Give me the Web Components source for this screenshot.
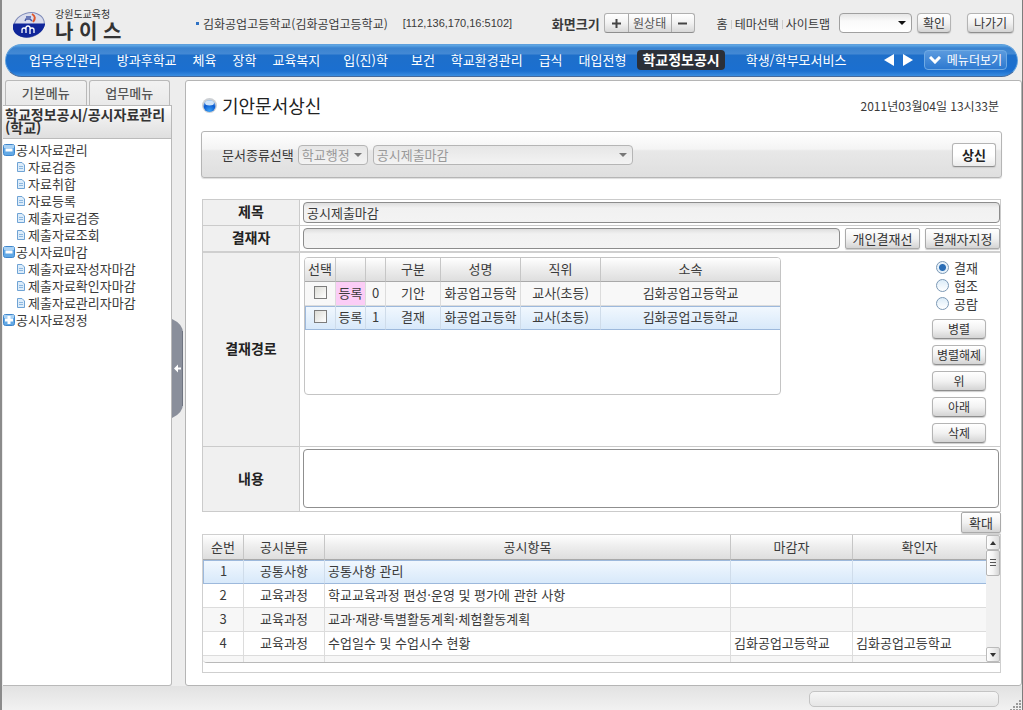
<!DOCTYPE html>
<html lang="ko">
<head>
<meta charset="utf-8">
<meta name="viewport" content="width=device-width, initial-scale=1">
<title>나이스 - 기안문서상신</title>
<style>
html { height: 100%; }
body { margin: 0; min-height: 100%; display: flex; font: 13px/17px "Noto Sans CJK KR", "Noto Sans", sans-serif; color: #3a3a3a; background: #ededed; }
neis-app { flex: 1; }
</style>
</head>
<body>
<neis-app></neis-app>
<script>
const base = `
*, *::before, *::after { box-sizing: border-box; }
button, input, select, textarea { font: inherit; color: inherit; margin: 0; }
a { color: inherit; text-decoration: none; }
`;
function define(name, css, html, setup) {
  const template = document.createElement('template');
  template.innerHTML = `<style>${base}${css}</style>${html}`;
  customElements.define(name, class extends HTMLElement {
    constructor() {
      super();
      this.attachShadow({ mode: 'open' }).append(template.content.cloneNode(true));
    }
    connectedCallback() {
      if (setup) setup(this, this.shadowRoot);
    }
  });
}

/* Push button; variants: strong, square */
define('ui-button', `
:host { display: inline-flex; height: 20px; font-size: 12px; color: #333; }
button { flex: 1; padding: 0 3px; border: 1px solid #b4b4b4; border-bottom-color: #8e8e8e; border-radius: 4px; line-height: 16px; white-space: nowrap;
  background: linear-gradient(#fff, #f2f2f2 50%, #d4d4d4); box-shadow: 0 1px 1px #ccc; }
:host([variant="square"]) button { border-radius: 2px; border-color: #aaa; }
:host([variant="square"]) { height: 21px; font-size: 13px; }
:host([variant="strong"]) { height: 24px; font-size: 13px; font-weight: 700; color: #222; }
:host([variant="strong"]) button { padding: 0 9px; border-radius: 3px; background: linear-gradient(#fff, #fff 50%, #ebebeb); }
`, `<button type="button"><slot></slot></button>`);

/* Drop-down frame; the select itself is passed in by the user */
define('ui-select', `
:host { display: inline-flex; position: relative; height: 20px; }
::slotted(select) { appearance: none; flex: 1; width: 100%; min-width: 0; padding: 0 18px 0 3px; border: 1px solid #a0a0a0; border-radius: 4px; background: linear-gradient(#e6e6e6, #fafafa 40%, #fff); font: inherit; line-height: 18px; color: inherit; opacity: 1; }
:host([muted]) { color: #999; }
:host([muted]) ::slotted(select) { border-color: #b5b5b5; background: linear-gradient(#e6e6e6, #f3f3f3); }
svg { position: absolute; right: 6px; top: 8px; pointer-events: none; fill: #111; }
:host([muted]) svg { fill: #777; }
`, `<slot></slot><svg width="8" height="4" viewBox="0 0 8 4"><path d="M0 0h8L4 4z"/></svg>`);

define('neis-logo', `
:host { display: flex; align-items: flex-start; gap: 10px; }
.words { display: flex; flex-direction: column; }
small { font-size: 10px; line-height: 12px; color: #333; }
strong { font-size: 20px; line-height: 22px; color: #333; }
svg { margin-top: 3px; }
`, `
<svg width="32" height="28" viewBox="0 0 32 28">
  <defs><clipPath id="c"><ellipse cx="16" cy="14" rx="16.5" ry="12" transform="rotate(-17 16 14)"/></clipPath></defs>
  <ellipse cx="16" cy="14" rx="15.500" ry="12" transform="rotate(-17 16 14)" fill="#d9dcec" stroke="#7f8bb8"/>
  <path clip-path="url(#c)" d="M0 12.500h32v16H0z" fill="#10269a"/>
  <path d="M19 3q5 3 1 8" stroke="#e0562a" stroke-width="2" fill="none"/>
  <path d="M12 10l1-2h4l2 2M13 6h5" stroke="#4558a5" stroke-width="1.500" fill="none"/>
  <path d="M9 22v-3q0-2 2-2t2 2v3M13 19v-2q0-2 2-2t2 2v6M17 19q0-2 2-2t2 2v3" stroke="#fff" stroke-width="1.300" fill="none"/>
</svg>
<span class="words"><small>강원도교육청</small><strong>나 이 스</strong></span>`);

define('app-header', `
:host { display: flex; align-items: flex-start; height: 44px; padding: 8px 8px 0 11px; font-size: 12px; white-space: nowrap; }
neis-logo { width: 183px; }
.info { display: flex; align-items: center; gap: 4px; margin-top: 7px; }
.info::before { content: ""; width: 3px; height: 3px; background: #2f72c4; }
.ip { margin-left: 11px; font: 11px/17px "Liberation Sans", Arial, sans-serif; }
.tools { display: flex; align-items: center; margin: 5px 0 0 auto; height: 20px; }
.tools b { font-size: 13px; margin-right: 4px; }
.zoom { display: flex; height: 20px; margin-right: 22px; border: 1px solid #b0b0b0; border-bottom-color: #8e8e8e; border-radius: 3px; background: linear-gradient(#fff, #f2f2f2 50%, #d8d8d8); }
.zoom button { padding: 0; width: 23px; border: 0; background: none; line-height: 16px; color: #555; display: grid; place-items: center; }
.zoom button + button { border-left: 1px solid #aaa; }
.zoom .mid { width: 43px; }
nav { display: flex; gap: 3px; margin-right: 9px; }
nav a + a::before { content: ""; display: inline-block; width: 1px; height: 9px; background: #ccc; margin-right: 3px; }
ui-select { width: 73px; margin-right: 5px; }
.ok { width: 34px; margin-right: 16px; }
.out { width: 47px; }
`, `
<neis-logo></neis-logo>
<div class="info"><span>김화공업고등학교(김화공업고등학교)</span><span class="ip">[112,136,170,16:5102]</span></div>
<div class="tools">
  <b>화면크기</b>
  <div class="zoom">
    <button type="button" aria-label="확대"><svg width="9" height="9" viewBox="0 0 9 9"><path d="M4.500 0v9M0 4.500h9" stroke="#444" stroke-width="2"/></svg></button>
    <button type="button" class="mid">원상태</button>
    <button type="button" aria-label="축소"><svg width="9" height="9" viewBox="0 0 9 9"><path d="M0 4.500h9" stroke="#444" stroke-width="2"/></svg></button>
  </div>
  <nav><a href="#">홈</a><a href="#">테마선택</a><a href="#">사이트맵</a></nav>
  <ui-select><select aria-label="바로가기"><option></option></select></ui-select>
  <ui-button class="ok">확인</ui-button>
  <ui-button class="out">나가기</ui-button>
</div>`);

define('main-nav', `
:host { display: flex; align-items: center; height: 33px; margin: 0 4px 0 3px; padding: 0 10px 2px 23px; border-radius: 17px; color: #fff; white-space: nowrap;
  border: 1px solid #5d9fdc; border-bottom-color: #44699c; background: linear-gradient(#62aae6, #3a83d0 3px, #4489d4 9px, #1e6fca 10px, #1b6fd0 26px, #3a8ce0); }
nav { display: flex; align-items: center; gap: 16px; }
.wide { margin: 0 7px; }
.on { margin: 0 5px; margin-left: -5px; padding: 1px 5px 2px; border-radius: 4px; background: #2b2f38; font-size: 14px; font-weight: 700; }
.move { display: flex; gap: 9px; margin-left: auto; }
.move button { display: flex; padding: 0; border: 0; background: none; }
.move svg { fill: #fff; }
.more { display: flex; align-items: center; gap: 6px; height: 20px; margin-left: 11px; padding: 0 4px; border: 1px solid #6faae4; border-radius: 4px; background: linear-gradient(#5b9ade, #2d79d0); font-size: 12px; line-height: 18px; }
`, `
<nav>
<a href="#">업무승인관리</a><a href="#">방과후학교</a><a href="#">체육</a><a href="#">장학</a><a href="#">교육복지</a><a href="#" class="wide">입(진)학</a><a href="#">보건</a><a href="#">학교환경관리</a><a href="#">급식</a><a href="#">대입전형</a><a href="#" class="on" aria-current="page">학교정보공시</a><a href="#">학생/학부모서비스</a>
</nav>
<div class="move">
<button type="button" aria-label="이전"><svg width="10" height="12" viewBox="0 0 10 12"><path d="M10 0v12L0 6z"/></svg></button>
<button type="button" aria-label="다음"><svg width="10" height="12" viewBox="0 0 10 12"><path d="M0 0v12l10-6z"/></svg></button>
</div>
<button type="button" class="more"><svg width="12" height="8" viewBox="0 0 12 8"><path d="M1 1l5 5 5-5" fill="none" stroke="#fff" stroke-width="3"/></svg>메뉴더보기</button>`);

/* Tree line: kind is open, closed or page */
define('tree-item', `
:host { display: block; height: 17px; }
a { display: flex; align-items: center; gap: 1px; line-height: 17px; white-space: nowrap; }
svg { display: none; flex: none; }
:host([kind="page"]) { padding-left: 14px; }
:host([kind="page"]) a { gap: 3px; }
:host([kind="page"]) .page, :host([kind="open"]) .open, :host([kind="closed"]) .closed { display: block; }
`, `<a href="#">
<svg class="open" width="12" height="12" viewBox="0 0 12 12"><rect x=".5" y=".5" width="11" height="11" rx="2" fill="#62a9e6" stroke="#3f86cc"/><path d="M1 1h10v3H1z" fill="#a9d2f5"/><rect x="2.500" y="4.500" width="7" height="3" fill="#fff"/></svg>
<svg class="closed" width="12" height="12" viewBox="0 0 12 12"><rect x=".5" y=".5" width="11" height="11" rx="2" fill="#62a9e6" stroke="#3f86cc"/><path d="M1 1h10v3H1z" fill="#a9d2f5"/><path d="M6 2v8M2 6h8" stroke="#fff" stroke-width="3"/></svg>
<svg class="page" width="8" height="10" viewBox="0 0 8 10"><path d="M.5.5h4.500l2.500 2.500v6.500H.5z" fill="#dcecfa" stroke="#6fa3d4"/><path d="M2 4.500h4M2 6.500h4" stroke="#8db8e0"/></svg>
<span><slot></slot></span></a>`);

define('side-menu', `
:host { display: flex; flex-direction: column; width: 170px; flex: none; padding-left: 1px; }
.tabs { display: flex; gap: 2px; padding: 0 2px; height: 25px; }
.tabs button { flex: 1; padding: 0; border: 1px solid #b9b9b9; border-bottom: 0; border-radius: 3px 3px 0 0; background: linear-gradient(#f2f2f2, #e9e9e9); font-weight: 500; line-height: 22px; color: #555; }
.box { flex: 1; background: #fff; border: 1px solid #b9b9b9; border-left: 0; border-radius: 0 0 3px 0; }
h2 { margin: 0; height: 33px; padding: 2px 2px 0; border-bottom: 1px solid #bbb; background: linear-gradient(#fff, #f0f0f0 35%, #dfdfdf); font-size: 14px; line-height: 13px; color: #333; }
.tree { padding-top: 2px; }
`, `
<div class="tabs"><button type="button">기본메뉴</button><button type="button">업무메뉴</button></div>
<div class="box"><h2>학교정보공시/공시자료관리(학교)</h2>
<nav class="tree">
<tree-item kind="open">공시자료관리</tree-item><tree-item kind="page">자료검증</tree-item><tree-item kind="page">자료취합</tree-item><tree-item kind="page">자료등록</tree-item><tree-item kind="page">제출자료검증</tree-item><tree-item kind="page">제출자료조회</tree-item>
<tree-item kind="open">공시자료마감</tree-item><tree-item kind="page">제출자료작성자마감</tree-item><tree-item kind="page">제출자료확인자마감</tree-item><tree-item kind="page">제출자료관리자마감</tree-item><tree-item kind="closed">공시자료정정</tree-item>
</nav></div>`);

define('side-splitter', `
:host { display: flex; flex-direction: column; justify-content: center; width: 13px; flex: none; padding-bottom: 30px; }
button { display: flex; align-items: center; justify-content: center; width: 12px; height: 99px; padding: 0; border: 0; background: none; }
`, `<button type="button" aria-label="메뉴 접기"><svg width="12" height="99" viewBox="0 0 12 99"><path d="M0 0q11 5 11 14v71q0 9-11 14z" fill="#8a8f9b"/><path d="M10.500 12v75" stroke="#6e7380"/><path d="M2 49.500l4-4v3h3v2H6v3z" fill="#fff"/></svg></button>`);

const makeTable = (root, cols, rows) => {
  const table = root.querySelector('table');
  const cg = document.createElement('colgroup');
  const head = table.createTHead().insertRow();
  for (const c of cols) {
    const col = document.createElement('col');
    if (c.w) col.style.width = c.w + 'px';
    cg.append(col);
    const th = document.createElement('th');
    th.scope = 'col';
    th.textContent = c.t;
    head.append(th);
  }
  table.prepend(cg);
  const body = table.createTBody();
  for (const r of rows) {
    const tr = body.insertRow();
    if (r.on) tr.className = 'on';
    r.cells.forEach((v, i) => {
      const td = tr.insertCell();
      if (cols[i].left) td.className = 'left';
      if (v === '[]') {
        const box = document.createElement('input');
        box.type = 'checkbox';
        box.setAttribute('aria-label', '선택');
        td.append(box);
      } else td.textContent = v;
      if (r.mark === i) td.className = 'mark';
    });
  }
};
const tableCss = `
table { width: 100%; table-layout: fixed; border-collapse: separate; border-spacing: 0; }
th, td { height: 24px; padding: 0 0 2px; font-weight: 400; text-align: center; line-height: 17px; white-space: nowrap; overflow: hidden; border-right: 1px solid #dcdcdc; border-bottom: 1px solid #dcdcdc; }
th:last-child, td:last-child { border-right: 0; }
th { border-right-color: #c6c6c6; border-bottom-color: #a9a9a9; background: linear-gradient(#fff, #f0f0f0 40%, #dedede); }
td.left { text-align: left; padding-left: 3px; }
.on td { background: linear-gradient(#f2f8fe, #d8e9fa); border-bottom-color: #9db9dc; border-right-color: #cfdcea; box-shadow: inset 0 1px #9db9dc; }
.on td:first-child { border-left: 1px solid #9db9dc; }
`;

define('route-grid', `
:host { display: block; width: 477px; height: 138px; border: 1px solid #c4c4c4; border-radius: 4px; overflow: hidden; background: #fff; }
${tableCss}
tbody tr:first-child td { background: #f8f8f8; }
tbody tr:first-child td.mark { background: #fbcdf6; }
input { appearance: none; display: block; width: 13px; height: 13px; margin: 0 auto; border: 1px solid #7c7c7c; background: linear-gradient(135deg, #dcdcd6, #fff); }
`, `<table></table>`, (el, root) => makeTable(root,
  [{ t: '선택', w: 31 }, { t: '', w: 30 }, { t: '', w: 20 }, { t: '구분', w: 55 }, { t: '성명', w: 80 }, { t: '직위', w: 80 }, { t: '소속' }],
  [{ cells: ['[]', '등록', '0', '기안', '화공업고등학', '교사(초등)', '김화공업고등학교'], mark: 1 },
   { cells: ['[]', '등록', '1', '결재', '화공업고등학', '교사(초등)', '김화공업고등학교'], on: true }]));

define('item-grid', `
:host { display: block; border: 1px solid #cfcfcf; padding-bottom: 9px; }
.view { display: flex; height: 128px; overflow: hidden; border-bottom: 1px solid #b9b9b9; border-radius: 0 0 0 4px; }
.data { flex: 1; min-width: 0; }
${tableCss}
th { height: 25px; }
tbody tr:nth-child(odd):not(.on) td { background: #f7f7f7; }
.bar { display: flex; flex-direction: column; width: 14px; background: #f0f0f0; }
.bar button { display: grid; place-items: center; width: 14px; height: 15px; padding: 0; border: 1px solid #bbb; border-radius: 2px; background: linear-gradient(90deg, #fff, #ddd); }
.thumb { height: 26px; display: grid; place-items: center; border: 1px solid #b5b5b5; border-radius: 2px; background: linear-gradient(90deg, #fff, #f4f4f4 50%, #d5d5d5); }
.bar .down { margin-top: auto; }
`, `<div class="view"><div class="data"><table></table></div>
<div class="bar"><button type="button" aria-label="위로"><svg width="6" height="4" viewBox="0 0 6 4"><path d="M0 4l3-4 3 4z" fill="#333"/></svg></button>
<div class="thumb"><svg width="6" height="9" viewBox="0 0 6 9"><path d="M0 .5h6M0 3.500h6M0 6.500h6" stroke="#555"/></svg></div>
<button type="button" class="down" aria-label="아래로"><svg width="6" height="4" viewBox="0 0 6 4"><path d="M0 0l3 4 3-4z" fill="#333"/></svg></button></div></div>`,
(el, root) => makeTable(root,
  [{ t: '순번', w: 41 }, { t: '공시분류', w: 81 }, { t: '공시항목', left: 1 }, { t: '마감자', w: 122, left: 1 }, { t: '확인자', w: 133, left: 1 }],
  [{ cells: ['1', '공통사항', '공통사항 관리', '', ''], on: true },
   { cells: ['2', '교육과정', '학교교육과정 편성·운영 및 평가에 관한 사항', '', ''] },
   { cells: ['3', '교육과정', '교과·재량·특별활동계획·체험활동계획', '', ''] },
   { cells: ['4', '교육과정', '수업일수 및 수업시수 현황', '김화공업고등학교', '김화공업고등학교'] },
   { cells: ['', '', '', '', ''] }]));

define('page-title', `
:host { display: flex; align-items: center; height: 50px; padding: 0 3px 2px 1px; }
h1 { margin: 0 auto 0 5px; font-size: 18px; line-height: 24px; font-weight: 400; color: #222; }
time { font-size: 12px; }
`, `<svg width="15" height="15" viewBox="0 0 15 15"><defs><radialGradient id="g" cx=".5" cy=".9" r=".9"><stop offset="0" stop-color="#3aa0f5"/><stop offset=".6" stop-color="#0b5bd0"/><stop offset="1" stop-color="#8fc0f2"/></radialGradient></defs><circle cx="7.500" cy="7.500" r="7.500" fill="#cdd0d4"/><circle cx="7.500" cy="8" r="6" fill="url(#g)"/><ellipse cx="7.500" cy="5" rx="4.500" ry="2.500" fill="#cfe4fa"/></svg>
<h1><slot></slot></h1><time datetime="2011-03-04T13:33">2011년03월04일 13시33분</time>`);

define('search-box', `
:host { display: flex; align-items: center; gap: 5px; height: 47px; padding: 0 5px 0 20px; border: 1px solid #b5b5b5; border-radius: 3px; background: linear-gradient(#fff, #f4f4f4 38%, #e8e8e8 42%, #dfdfdf); box-shadow: 0 1px 1px #ddd; }
label { margin-right: -1px; }
.kind { width: 70px; }
.form { width: 260px; }
ui-button { margin-left: auto; }
`, `<label for="kind">문서종류선택</label>
<ui-select muted class="kind"><select id="kind" disabled><option>학교행정</option></select></ui-select>
<ui-select muted class="form"><select aria-label="서식" disabled><option>공시제출마감</option></select></ui-select>
<ui-button variant="strong">상신</ui-button>`);

define('approval-form', `
:host { display: block; border: 1px solid #cbcbcb; }
.row { display: grid; grid-template-columns: 97px minmax(0, 1fr); border-bottom: 1px solid #cbcbcb; }
.row:last-child { border-bottom: 0; }
.row.thick { border-bottom: 2px solid #cfcfcf; }
.name { display: grid; place-items: center; padding-bottom: 3px; border-right: 1px solid #cbcbcb; background: #f0f0f0; font-size: 14px; font-weight: 700; color: #222; line-height: 18px; }
.cell { display: flex; align-items: center; gap: 5px; min-height: 25px; padding-left: 3px; }
input[type="text"] { flex: 1; min-width: 0; height: 21px; padding: 0 3px; border: 1px solid #8c8c8c; border-radius: 4px; background: linear-gradient(#dedede, #f1f1f1 5px, #f3f3f3); }
.wide { width: 75px; }
.route { align-items: flex-start; justify-content: space-between; min-height: 193px; padding: 4px 14px 0 4px; }
.side { display: flex; flex-direction: column; gap: 6px; width: 54px; padding-top: 1px; }
fieldset { display: flex; flex-direction: column; margin: 0 0 1px 4px; padding: 0; border: 0; }
.radio { display: flex; align-items: center; gap: 5px; height: 18px; white-space: nowrap; }
.radio input { appearance: none; width: 13px; height: 13px; border: 1px solid #7b98b5; border-radius: 50%; background: linear-gradient(#dcecf8, #fff); }
.radio input:checked { background: radial-gradient(circle, #2a6db5 0 3px, #e6f1fa 4px); }
.note { height: 64px; padding: 2px 1px 3px 3px; align-items: stretch; }
textarea { flex: 1; min-width: 0; resize: none; border: 1px solid #8f8f8f; border-radius: 4px; background: #fff; }
`, `
<div class="row"><label class="name" for="t">제목</label><div class="cell"><input id="t" type="text" value="공시제출마감"></div></div>
<div class="row thick"><label class="name" for="p">결재자</label><div class="cell"><input id="p" type="text"><ui-button class="wide" variant="square">개인결재선</ui-button><ui-button class="wide" variant="square">결재자지정</ui-button></div></div>
<div class="row"><div class="name">결재경로</div><div class="cell route"><route-grid></route-grid>
<div class="side"><fieldset aria-label="결재 방법">
<label class="radio"><input type="radio" name="m" checked>결재</label>
<label class="radio"><input type="radio" name="m">협조</label>
<label class="radio"><input type="radio" name="m">공람</label></fieldset>
<ui-button>병렬</ui-button><ui-button>병렬해제</ui-button><ui-button>위</ui-button><ui-button>아래</ui-button><ui-button>삭제</ui-button></div></div></div>
<div class="row"><label class="name" for="n">내용</label><div class="cell note"><textarea id="n"></textarea></div></div>`);

define('document-panel', `
:host { display: flex; flex-direction: column; flex: 1; min-width: 0; padding: 0 19px 12px 15px; border: 1px solid #b5b5b5; border-radius: 3px; background: #fff; }
approval-form { margin: 21px 1px 0; }
.more { align-self: flex-end; width: 40px; margin: 0 1px 1px 0; }
item-grid { margin: 0 1px; }
`, `<page-title>기안문서상신</page-title><search-box></search-box><approval-form></approval-form>
<ui-button class="more" variant="square">확대</ui-button><item-grid></item-grid>`);

define('status-bar', `
:host { display: flex; align-items: center; justify-content: flex-end; gap: 11px; height: 25px; padding-right: 1px; background: linear-gradient(#e2e2e2, #f2f2f2); }
.track { width: 190px; height: 16px; border: 1px solid #c4c4c4; border-radius: 5px; background: linear-gradient(#f6f6f6, #e6e6e6); }
svg { align-self: flex-end; }
`, `<div class="track"></div><svg width="11" height="11" viewBox="0 0 11 11" fill="#9a9a9a"><path d="M9 0h2v2H9zM6 3h2v2H6zM9 3h2v2H9zM3 6h2v2H3zM6 6h2v2H6zM9 6h2v2H9zM0 9h2v2H0zM3 9h2v2H3zM6 9h2v2H6zM9 9h2v2H9z"/></svg>`);

define('neis-app', `
:host { display: flex; flex-direction: column; min-width: 0; border-left: 2px solid #8b8b8b; border-right: 1px solid #7d7d7d; background: #ededed; }
main { display: flex; flex: 1; margin-top: 3px; }
`, `<app-header></app-header><main-nav></main-nav>
<main><side-menu></side-menu><side-splitter></side-splitter><document-panel></document-panel></main>
<status-bar></status-bar>`);
</script>
</body>
</html>
